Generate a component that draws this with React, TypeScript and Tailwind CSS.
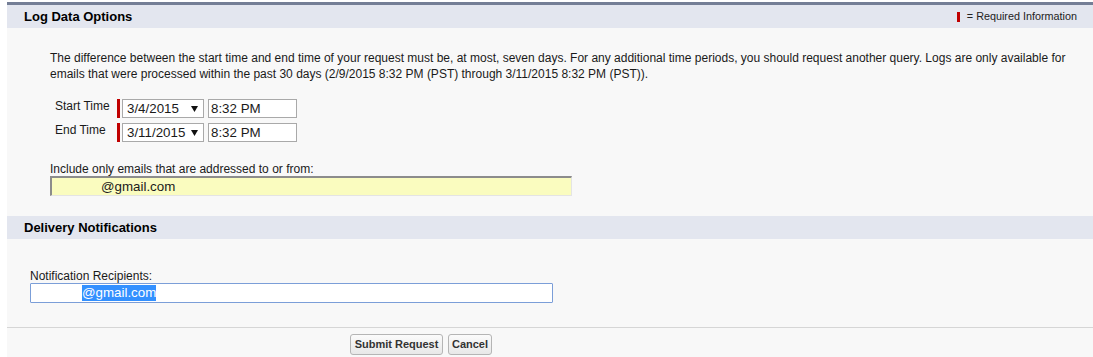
const fieldFont = "text-[13.33px] leading-[17px]"

function DateSelect({ value }: { value: string }) {
  return (
    <div className="ml-[2px] flex h-[19px] w-[82px] items-center justify-between border border-[#a9a9a9] bg-white pl-[4px] pr-[4px]">
      <span className={fieldFont}>{value}</span>
      <svg width="7" height="6" viewBox="0 0 7 6" className="mr-[1px]">
        <path d="M0 0 H7 L3.5 6 Z" fill="#111" />
      </svg>
    </div>
  )
}

function TimeRow({ label, date }: { label: string; date: string }) {
  return (
    <div className="flex h-[19px] items-start">
      <div className="w-[62px] text-[12px] leading-[14px]">{label}</div>
      <div className="h-[19px] w-[3px] bg-[#c00000]" />
      <DateSelect value={date} />
      <div className="ml-[4px] flex h-[19px] w-[89px] items-center border border-[#a9a9a9] bg-white pl-[2px]">
        <span className={fieldFont}>8:32 PM</span>
      </div>
    </div>
  )
}

function SectionHeader({ title, required }: { title: string; required?: boolean }) {
  return (
    <div className="flex h-[23px] items-center justify-between bg-[#e3e6ef] pl-[17px] pr-[16px]">
      <h3 className="text-[13px] font-bold text-[#000]">{title}</h3>
      {required && (
        <div className="flex items-center">
          <div className="h-[10px] w-[3px] bg-[#c00000]" />
          <span className="ml-[7px] text-[10.8px] text-[#222]">= Required Information</span>
        </div>
      )}
    </div>
  )
}

export default function App() {
  return (
    <div className="h-[357px] overflow-hidden bg-white pl-[7px] pt-[2px] font-['Liberation_Sans',Arial,sans-serif] text-[#1a1a1a]">
      <div className="flex h-full flex-col border-t-[3px] border-[#747e96] bg-[#f8f8f8]">
        <SectionHeader title="Log Data Options" required />

        <div className="pb-[20px] pl-[43px] pr-[8px] pt-[22px]">
          <p className="text-[12px] leading-[16px]">
            <span className="block whitespace-nowrap">
              The difference between the start time and end time of your request must be, at most, seven days. For any additional time periods, you should request another query. Logs are only available for
            </span>
            <span className="block whitespace-nowrap">
              emails that were processed within the past 30 days (2/9/2015 8:32 PM (PST) through 3/11/2015 8:32 PM (PST)).
            </span>
          </p>

          <div className="mt-[17px] flex flex-col gap-[5px] pl-[5px]">
            <TimeRow label="Start Time" date="3/4/2015" />
            <TimeRow label="End Time" date="3/11/2015" />
          </div>

          <div className="mt-[20px] text-[12px] leading-[14px]">Include only emails that are addressed to or from:</div>
          <div className="flex h-[20px] w-[522px] items-center border-b border-l-2 border-r border-t-2 border-b-[#e4e4e4] border-l-[#8c8c8c] border-r-[#e4e4e4] border-t-[#8c8c8c] bg-[#fafcbf] pl-[49px]">
            <span className={fieldFont}>@gmail.com</span>
          </div>
        </div>

        <SectionHeader title="Delivery Notifications" />

        <div className="pb-[24px] pl-[23px] pt-[30px]">
          <div className="text-[12px] leading-[14px]">Notification Recipients:</div>
          <div className="flex h-[20px] w-[523px] items-center rounded-[1px] border border-[#7b9ed8] bg-white pl-[51px]">
            <span className="bg-[#3390ff] text-[13.33px] leading-[16px] text-white">@gmail.com</span>
          </div>
        </div>

        <div className="flex gap-[5px] border-t border-[#d6d6d6] pl-[343px] pt-[6px]">
          <button className="h-[21px] w-[93px] rounded-[3px] border border-[#b5b5b5] bg-gradient-to-b from-[#fbfbfb] to-[#e8e8e8] text-[11px] font-bold text-[#333]">
            Submit Request
          </button>
          <button className="h-[21px] w-[44px] rounded-[3px] border border-[#b5b5b5] bg-gradient-to-b from-[#fbfbfb] to-[#e8e8e8] text-[11px] font-bold text-[#333]">
            Cancel
          </button>
        </div>
      </div>
    </div>
  )
}
